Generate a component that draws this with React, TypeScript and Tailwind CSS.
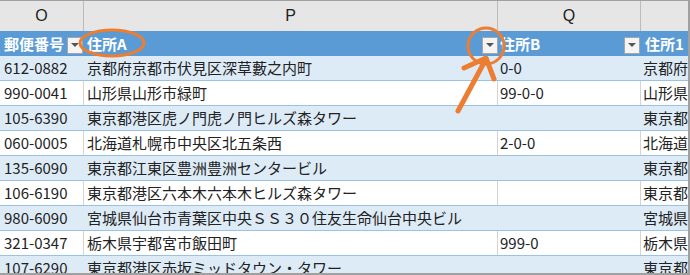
import React from "react";

const rows: [string, string, string, string][] = [
  ["612-0882", "京都府京都市伏見区深草藪之内町", "0-0", "京都府"],
  ["990-0041", "山形県山形市緑町", "99-0-0", "山形県"],
  ["105-6390", "東京都港区虎ノ門虎ノ門ヒルズ森タワー", "", "東京都"],
  ["060-0005", "北海道札幌市中央区北五条西", "2-0-0", "北海道"],
  ["135-6090", "東京都江東区豊洲豊洲センタービル", "", "東京都"],
  ["106-6190", "東京都港区六本木六本木ヒルズ森タワー", "", "東京都"],
  ["980-6090", "宮城県仙台市青葉区中央ＳＳ３０住友生命仙台中央ビル", "", "宮城県"],
  ["321-0347", "栃木県宇都宮市飯田町", "999-0", "栃木県"],
  ["107-6290", "東京都港区赤坂ミッドタウン・タワー", "", "東京都"],
];

const font = { fontFamily: '"Noto Sans CJK JP", "Noto Sans", sans-serif' };

function Drop() {
  return (
    <div className="w-[16px] h-[17px] shrink-0 bg-[#f4f4f4] border border-[#a6a6a6] flex items-center justify-center mt-[3px]">
      <svg width="8" height="5" viewBox="0 0 8 5">
        <polygon points="0,0 8,0 4,4" fill="#555" />
      </svg>
    </div>
  );
}

export default function App() {
  return (
    <div className="relative w-[690px] h-[275px] overflow-hidden bg-white border-t border-[#a0a0a0] border-r-2 border-b-2" style={font}>
      <div className="grid grid-cols-[84px_414px_143px_1fr] h-[30px] bg-[#e6e6e6] text-[#222] text-[16px]" style={{ fontFamily: '"Liberation Sans", sans-serif' }}>
        <div className="border-r border-[#bcbcbc] flex items-center justify-center">O</div>
        <div className="border-r border-[#bcbcbc] flex items-center justify-center">P</div>
        <div className="border-r border-[#bcbcbc] flex items-center justify-center">Q</div>
        <div></div>
      </div>
      <div className="grid grid-cols-[84px_414px_143px_1fr] h-[25px] bg-[#5b9bd5] text-white font-bold text-[15px] leading-none">
        <div className="flex items-center justify-between pl-[4px] pr-[1px]">
          <span className="whitespace-nowrap">郵便番号</span>
          <Drop />
        </div>
        <div className="flex items-center justify-between pl-[3px]">
          <span>住所A</span>
          <Drop />
        </div>
        <div className="flex items-center justify-between pl-[2px] pr-[1px]">
          <span>住所B</span>
          <Drop />
        </div>
        <div className="flex items-center pl-[4px] whitespace-nowrap">
          <span>住所1</span>
        </div>
      </div>
      {rows.map((r, i) => {
        const band = i % 2 === 0;
        return (
          <div
            key={i}
            className={
              band
                ? "grid grid-cols-[84px_414px_143px_1fr] h-[25px] bg-[#ddebf7] border-b border-[#9bc2e6] text-[15px] text-[#222] leading-none"
                : "grid grid-cols-[84px_414px_143px_1fr] h-[25px] bg-white border-b border-[#9bc2e6] text-[15px] text-[#222] leading-none"
            }
          >
            <div className={band ? "flex items-center pl-[4px] pb-[2px] border-r border-transparent" : "flex items-center pl-[4px] pb-[2px] border-r border-[#d4d4d4]"}>{r[0]}</div>
            <div className={band ? "flex items-center pl-[3px] pb-[2px] whitespace-nowrap border-r border-transparent" : "flex items-center pl-[3px] pb-[2px] whitespace-nowrap border-r border-[#d4d4d4]"}>{r[1]}</div>
            <div className={band ? "flex items-center pl-[2px] pb-[2px] border-r border-transparent" : "flex items-center pl-[2px] pb-[2px] border-r border-[#d4d4d4]"}>{r[2]}</div>
            <div className="flex items-center pl-[2px] pb-[2px] whitespace-nowrap overflow-hidden">{r[3]}</div>
          </div>
        );
      })}
      <svg className="absolute left-0 top-0 pointer-events-none" width="690" height="275" viewBox="0 0 690 275">
        <ellipse cx="112" cy="42" rx="32" ry="13" fill="none" stroke="#ed7d31" strokeWidth="3" />
        <circle cx="486" cy="45" r="18" fill="none" stroke="#ed7d31" strokeWidth="3" />
        <g stroke="#ed7d31" strokeWidth="5" strokeLinecap="round" strokeLinejoin="round" fill="none">
          <line x1="458" y1="110" x2="486" y2="58" />
          <polyline points="464,67 486,57 494,78" />
        </g>
      </svg>
    </div>
  );
}
